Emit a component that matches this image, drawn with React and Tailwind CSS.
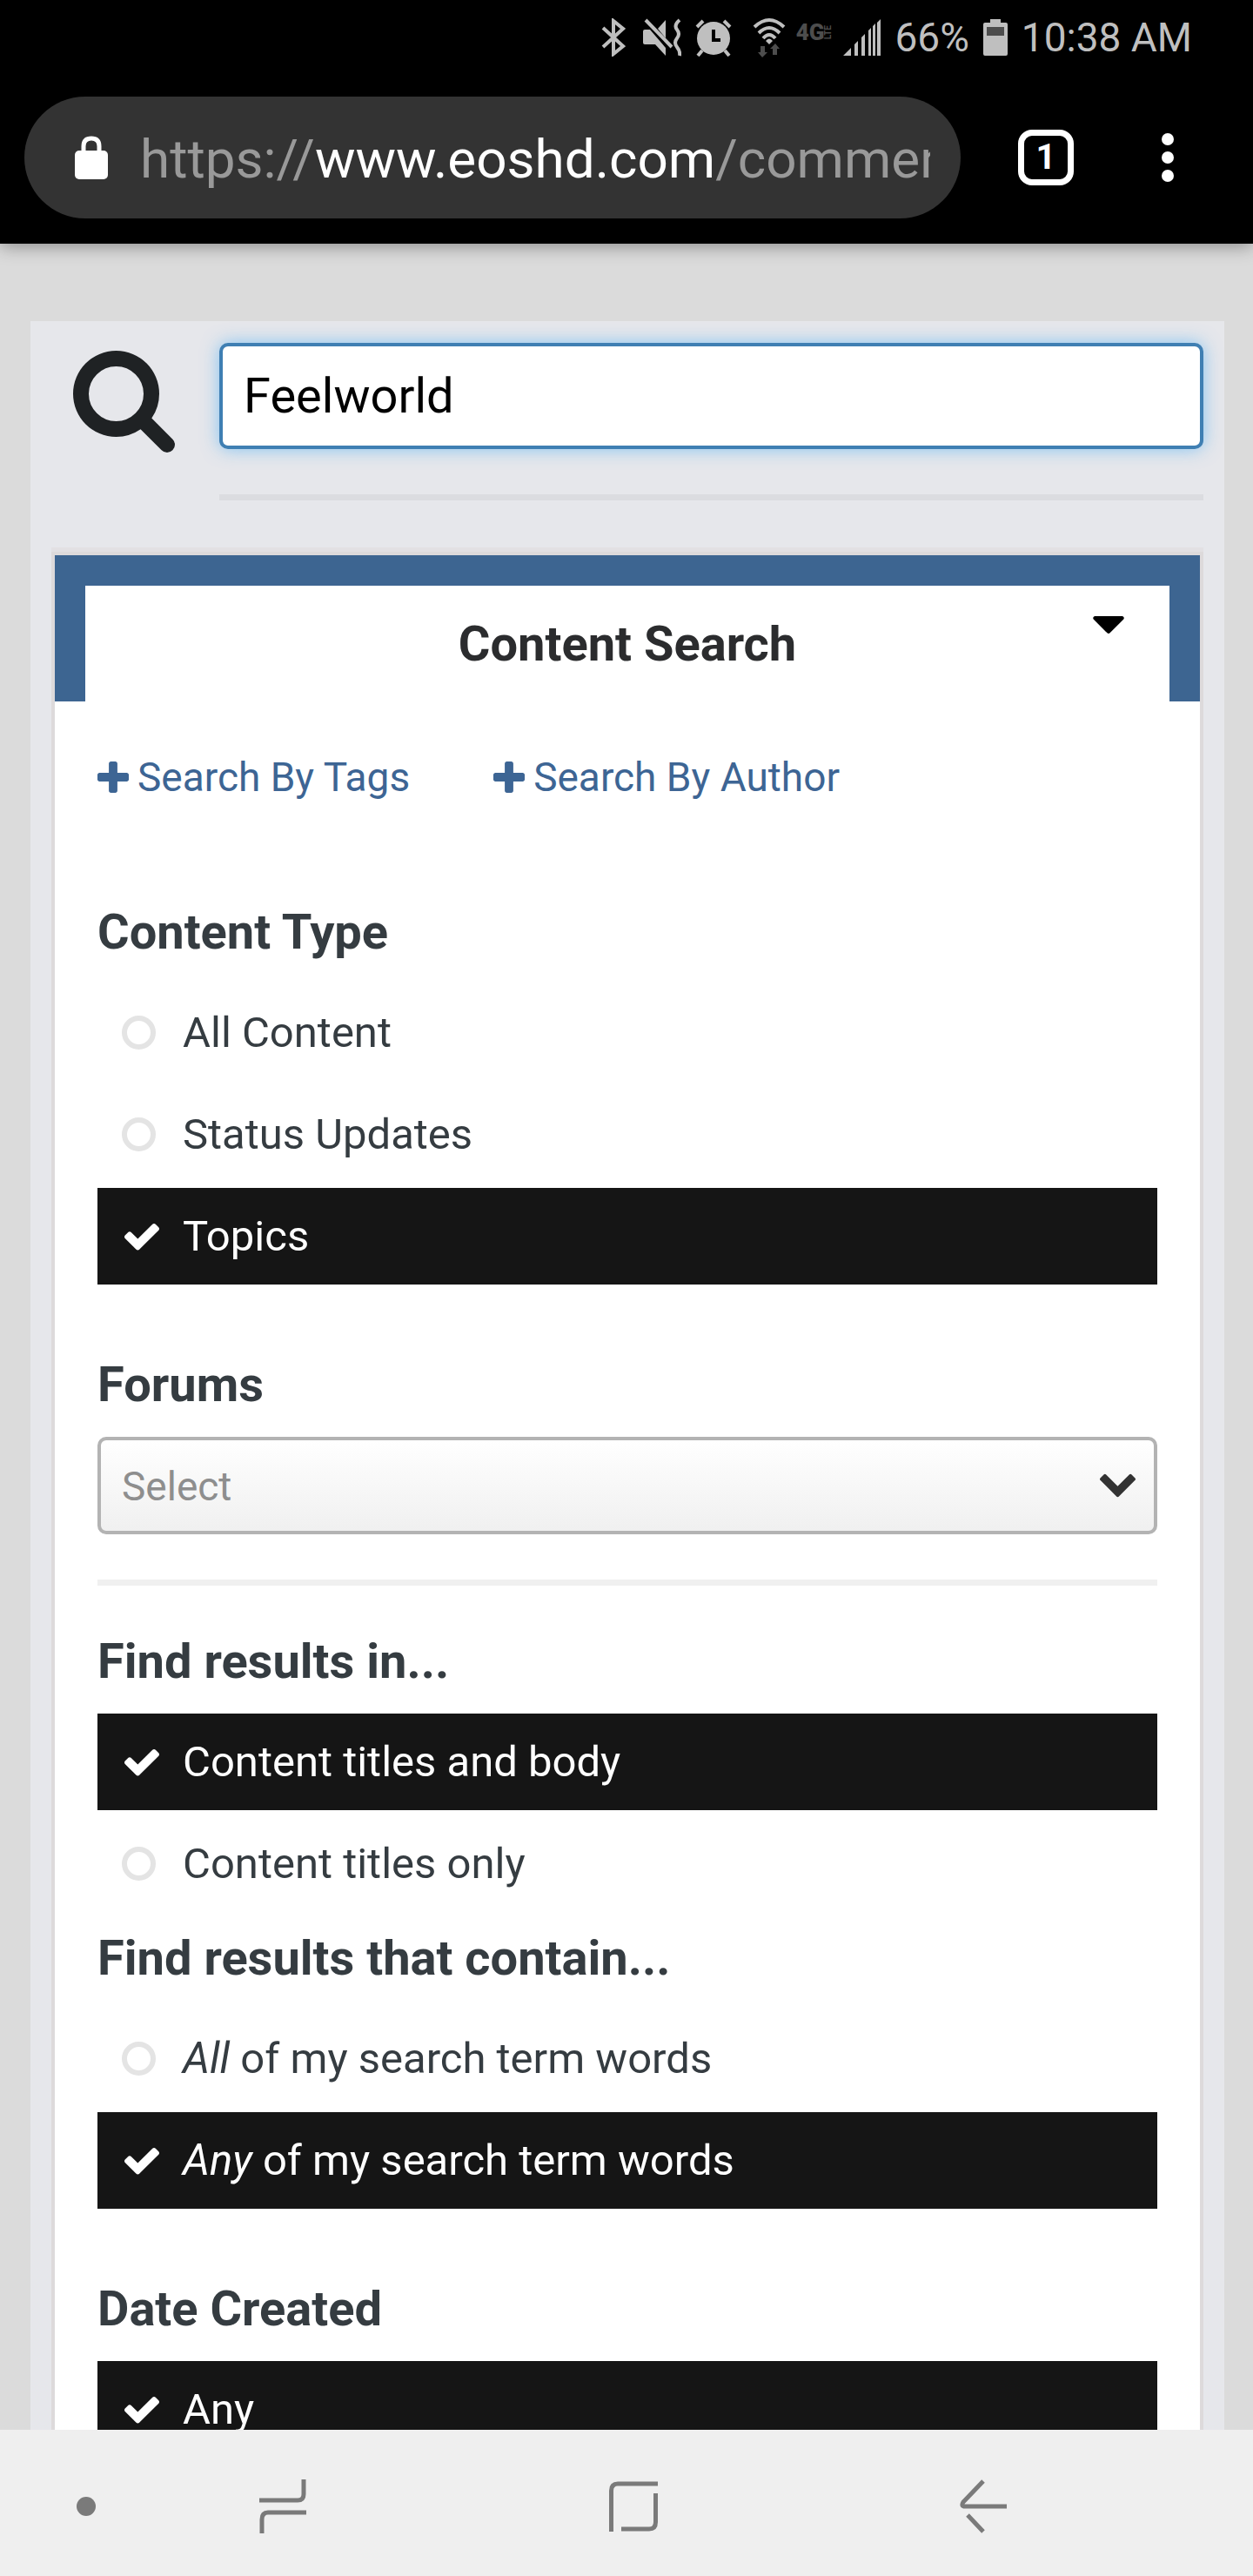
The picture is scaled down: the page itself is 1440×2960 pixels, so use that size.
import { useState } from "react";

function SearchIcon() {
  return (
    <svg className="size-[117px] shrink-0 fill-[#1f2224]" viewBox="64 128 1664 1664" aria-hidden="true">
      <path d="M1216 832q0-185-131.500-316.500t-316.500-131.500-316.500 131.500-131.500 316.500 131.500 316.500 316.500 131.500 316.500-131.500 131.500-316.500zm512 832q0 52-38 90t-90 38q-54 0-90-38l-343-342q-179 124-399 124-143 0-273.500-55.500t-225-150-150-225-55.500-273.500 55.500-273.500 150-225 225-150 273.500-55.500 273.500 55.500 225 150 150 225 55.500 273.500q0 220-124 399l343 343q37 37 37 90z" />
    </svg>
  );
}

function PlusIcon() {
  return (
    <svg className="size-9 shrink-0 fill-current" viewBox="192 128 1408 1408" aria-hidden="true">
      <path d="M1600 736v192q0 40-28 68t-68 28h-416v416q0 40-28 68t-68 28h-192q-40 0-68-28t-28-68v-416h-416q-40 0-68-28t-28-68v-192q0-40 28-68t68-28h416v-416q0-40 28-68t68-28h192q40 0 68 28t28 68v416h416q40 0 68 28t28 68z" />
    </svg>
  );
}

function StatusBar() {
  return (
    <div className="flex h-[86px] items-center justify-end bg-black pr-[70px] text-[46px] text-[#bfbfbf]">
      <svg className="mr-5 h-11 w-7" viewBox="0 0 28 44" fill="none" stroke="currentColor" strokeWidth="4" strokeLinejoin="miter" aria-hidden="true">
        <path d="M2 11L25 32L14 41V3L25 12L2 33" />
      </svg>
      <svg className="mr-4 h-11 w-11" viewBox="0 0 44 44" aria-hidden="true">
        <path fill="currentColor" d="M0 15Q0 13 2 13H8L26 34V43L14 30H2Q0 30 0 28ZM17 12L26 2V23Z" />
        <path d="M3 2L33 33" stroke="currentColor" strokeWidth="4" />
        <path d="M42 2Q35 8 39 13T39 23T39 33T42 43" fill="none" stroke="currentColor" strokeWidth="4" />
      </svg>
      <svg className="mr-6 h-11 w-[42px]" viewBox="0 0 42 44" aria-hidden="true">
        <circle cx="21" cy="23" r="19" fill="currentColor" />
        <path d="M2 10L9 3M40 10L33 3M8 37L3 43M34 37L39 43" stroke="currentColor" strokeWidth="4" />
        <path d="M21 13V25H29" fill="none" stroke="#000" strokeWidth="4" />
      </svg>
      <svg className="mr-3 h-[46px] w-[38px]" viewBox="0 0 38 46" fill="none" aria-hidden="true">
        <g stroke="currentColor" strokeWidth="4">
          <path d="M2 11Q19 -5 36 11" />
          <path d="M7 18Q19 6 31 18" />
          <path d="M12 24Q19 16 26 24" />
        </g>
        <path d="M15 27Q19 22 23 27L19 31Z" fill="currentColor" />
        <path d="M9 33H14V40H17L11 46L6 40H9ZM23 43H28V36H31L26 30L20 36H23Z" fill="#4d4d4d" />
      </svg>
      <span className="mr-3 mb-3 flex items-center text-[#4d4d4d]" aria-label="4G LTE">
        <span className="text-[26px] leading-5 font-black">4G</span>
        <span className="rotate-180 text-[10px] leading-[10px] font-bold [writing-mode:vertical-rl]">LTE</span>
      </span>
      <svg className="mr-4 h-[42px] w-[43px]" viewBox="0 0 43 42" fill="currentColor" aria-hidden="true">
        <path d="M0 42L9 33V42ZM13 29L17 25V42H13ZM21 21L25 17V42H21ZM29 13L32 10V42H29ZM34 8L37 5V42H34ZM39 4L43 0V42H39Z" />
      </svg>
      <span>66%</span>
      <svg className="mr-4 ml-4 h-[42px] w-7" viewBox="0 0 28 42" aria-hidden="true">
        <path fill="currentColor" d="M8 0H20V4H26Q28 4 28 6V40Q28 42 26 42H2Q0 42 0 40V6Q0 4 2 4H8Z" />
        <path d="M4 9H24V19H4Z" fill="#4d4d4d" />
      </svg>
      <span>10:38 AM</span>
    </div>
  );
}

function AddressBar() {
  return (
    <header className="relative z-10 flex h-[194px] shrink-0 items-center bg-black pr-[76px] pb-1 pl-7 shadow-[0_2px_20px_rgba(0,0,0,0.4)]">
      <button type="button" className="flex h-[140px] min-w-0 flex-1 items-center rounded-full bg-[#333333] pr-[35px] pl-[58px] text-left">
        <svg className="mr-[37px] h-[50px] w-[38px] shrink-0" viewBox="0 0 38 50" aria-hidden="true">
          <rect y="17" width="38" height="33" rx="5" fill="#fff" />
          <path d="M10 20V12Q10 3 19 3T28 12V20" fill="none" stroke="#fff" strokeWidth="5" />
        </svg>
        <span className="overflow-hidden pt-1 text-[62px] leading-[72px] whitespace-nowrap text-[#999999]">
          https://<span className="text-white">www.eoshd.com</span>/comments
        </span>
      </button>
      <button type="button" aria-label="Open tabs" className="ml-[66px] flex size-16 shrink-0 items-center justify-center rounded-2xl border-[7px] border-white text-[40px] leading-none font-bold text-white">
        1
      </button>
      <button type="button" aria-label="More options" className="ml-[86px] flex w-11 shrink-0 flex-col items-center gap-[7px]">
        <span className="size-[14px] rounded-full bg-white" />
        <span className="size-[14px] rounded-full bg-white" />
        <span className="size-[14px] rounded-full bg-white" />
      </button>
    </header>
  );
}

function Option({ name, value, checked, onChange, children }) {
  return (
    <label className="flex h-[111px] shrink-0 items-center pl-7 text-[49px] text-[#353c41] has-checked:bg-[#151515] has-checked:text-white">
      <span className="mr-[27px] grid w-[43px] shrink-0 items-center">
        <input
          type="radio"
          name={name}
          value={value}
          checked={checked}
          onChange={onChange}
          className="peer col-start-1 row-start-1 size-[39px] appearance-none justify-self-start rounded-full border-[6px] border-[#e4e4e4] checked:border-transparent"
        />
        <svg className="col-start-1 row-start-1 hidden h-8 w-10 justify-self-end fill-white peer-checked:block" viewBox="121 314 1550 1208" aria-hidden="true">
          <path d="M1671 566q0 40-28 68l-724 724-136 136q-28 28-68 28t-68-28l-136-136-362-362q-28-28-28-68t28-68l136-136q28-28 68-28t68 28l294 295 656-657q28-28 68-28t68 28l136 136q28 28 28 68z" />
        </svg>
      </span>
      <span className="whitespace-nowrap">{children}</span>
    </label>
  );
}

function OptionGroup({ title, name, initial, options, className }) {
  const [selected, setSelected] = useState(initial);
  return (
    <fieldset className={className}>
      <legend className="mb-[27px] text-[56px] leading-[66px] font-bold text-[#353c41]">{title}</legend>
      <div className="flex flex-col gap-[6px]">
        {options.map((option) => (
          <Option
            key={option.value}
            name={name}
            value={option.value}
            checked={selected === option.value}
            onChange={() => setSelected(option.value)}
          >
            {option.label}
          </Option>
        ))}
      </div>
    </fieldset>
  );
}

function SearchCard() {
  return (
    <section className="mx-7 bg-white shadow-[0_0_0_4px_rgba(215,212,212,0.5),0_-5px_0_4px_rgba(215,205,205,0.25)]">
      <div className="border-x-[35px] border-t-[35px] border-[#3d6591]">
        <button type="button" className="relative flex h-[133px] w-full items-center justify-center text-[56px] font-bold text-[#2b2c2e]">
          Content Search
          <svg className="absolute top-[35px] right-[52px] h-5 w-9 fill-black" viewBox="384 640 1024 576" aria-hidden="true">
            <path d="M1408 704q0 26-19 45l-448 448q-19 19-45 19t-45-19l-448-448q-19-19-19-45t19-45 45-19h896q26 0 45 19t19 45z" />
          </svg>
        </button>
      </div>
      <div className="px-[49px]">
        <div className="mt-[59px] flex gap-24 text-[46px] leading-[56px] text-[#3d6594]">
          <a href="#tags" className="flex items-center gap-[10px]">
            <PlusIcon />
            Search By Tags
          </a>
          <a href="#author" className="flex items-center gap-[10px]">
            <PlusIcon />
            Search By Author
          </a>
        </div>

        <OptionGroup
          className="mt-[117px]"
          title="Content Type"
          name="type"
          initial="topics"
          options={[
            { value: "all", label: "All Content" },
            { value: "status", label: "Status Updates" },
            { value: "topics", label: "Topics" },
          ]}
        />

        <div className="mt-[82px]">
          <label htmlFor="forums" className="block text-[56px] leading-[66px] font-bold text-[#353c41]">
            Forums
          </label>
          <div className="mt-[27px] grid">
            <select
              id="forums"
              className="col-start-1 row-start-1 h-28 w-full appearance-none rounded-[10px] border-4 border-[#b3b3b3] bg-linear-to-b from-white to-[#f0f0f0] pt-[2px] pr-20 pl-6 text-[46px] text-[#8e8e8e]"
            >
              <option>Select</option>
            </select>
            <svg className="pointer-events-none col-start-1 row-start-1 mr-[25px] h-7 w-[41px] self-center justify-self-end fill-[#333333]" viewBox="90 533 1612 1035" aria-hidden="true">
              <path d="M1683 808l-742 741q-19 19-45 19t-45-19l-742-741q-19-19-19-45.500t19-45.500l166-165q19-19 45-19t45 19l531 531 531-531q19-19 45-19t45 19l166 165q19 19 19 45.500t-19 45.500z" />
            </svg>
          </div>
        </div>

        <hr className="mt-[52px] h-[7px] border-0 bg-[#f0f0f0]" />

        <OptionGroup
          className="mt-[54px]"
          title="Find results in..."
          name="scope"
          initial="body"
          options={[
            { value: "body", label: "Content titles and body" },
            { value: "titles", label: "Content titles only" },
          ]}
        />
        <OptionGroup
          className="mt-5"
          title="Find results that contain..."
          name="match"
          initial="any"
          options={[
            { value: "all", label: <><em>All</em> of my search term words</> },
            { value: "any", label: <><em>Any</em> of my search term words</> },
          ]}
        />
        <OptionGroup
          className="mt-[82px]"
          title="Date Created"
          name="created"
          initial="any"
          options={[{ value: "any", label: "Any" }]}
        />
      </div>
    </section>
  );
}

function NavigationBar() {
  return (
    <nav className="flex h-[168px] shrink-0 items-center bg-[#efefef] pt-2 pl-[88px] text-[#7a7a7a]">
      <button type="button" aria-label="Hide bar" className="size-[22px] rounded-full bg-[#7a7a7a]" />
      <div className="ml-[188px] flex w-[859px] items-center justify-between">
        <button type="button" aria-label="Recent apps">
          <svg className="h-[62px] w-[54px]" viewBox="0 0 54 62" fill="none" stroke="currentColor" strokeWidth="5" aria-hidden="true">
            <path d="M51 0V17Q51 24 44 24H0M3 62V46Q3 38 10 38H54" />
          </svg>
        </button>
        <button type="button" aria-label="Home">
          <svg className="h-[58px] w-14" viewBox="0 0 56 58" fill="none" stroke="currentColor" strokeWidth="5" aria-hidden="true">
            <path d="M2.500 58V11Q2.500 3 10 3H56M53.500 14V47Q53.500 55 46 55H14" />
          </svg>
        </button>
        <button type="button" aria-label="Back">
          <svg className="h-[62px] w-[54px]" viewBox="0 0 54 62" fill="none" stroke="currentColor" strokeWidth="5" aria-hidden="true">
            <path d="M27 2L4 26Q1 31 6 31H54M9 41L27 60" />
          </svg>
        </button>
      </div>
    </nav>
  );
}

export default function App() {
  return (
    <div className="flex h-screen flex-col overflow-hidden bg-[#dbdbdb] font-['Roboto',sans-serif]">
      <StatusBar />
      <AddressBar />
      <main className="min-h-0 flex-1 overflow-hidden pt-[89px] pr-[33px] pl-[35px]">
        <div className="bg-[#e6e7eb]">
          <form className="flex pt-[25px] pr-6 pl-[49px]" onSubmit={(event) => event.preventDefault()}>
            <div className="pt-[9px] pr-[51px]">
              <SearchIcon />
            </div>
            <div className="min-w-0 flex-1">
              <input
                type="text"
                aria-label="Search"
                defaultValue="Feelworld"
                className="block h-[122px] w-full rounded-[10px] border-4 border-[#3f7fb3] bg-white px-6 text-[56px] text-black shadow-[0_0_20px_rgba(90,180,245,0.7)] outline-none"
              />
              <hr className="mt-[52px] mb-[63px] h-[7px] border-0 bg-[#dbdce0]" />
            </div>
          </form>
          <SearchCard />
        </div>
      </main>
      <NavigationBar />
    </div>
  );
}
